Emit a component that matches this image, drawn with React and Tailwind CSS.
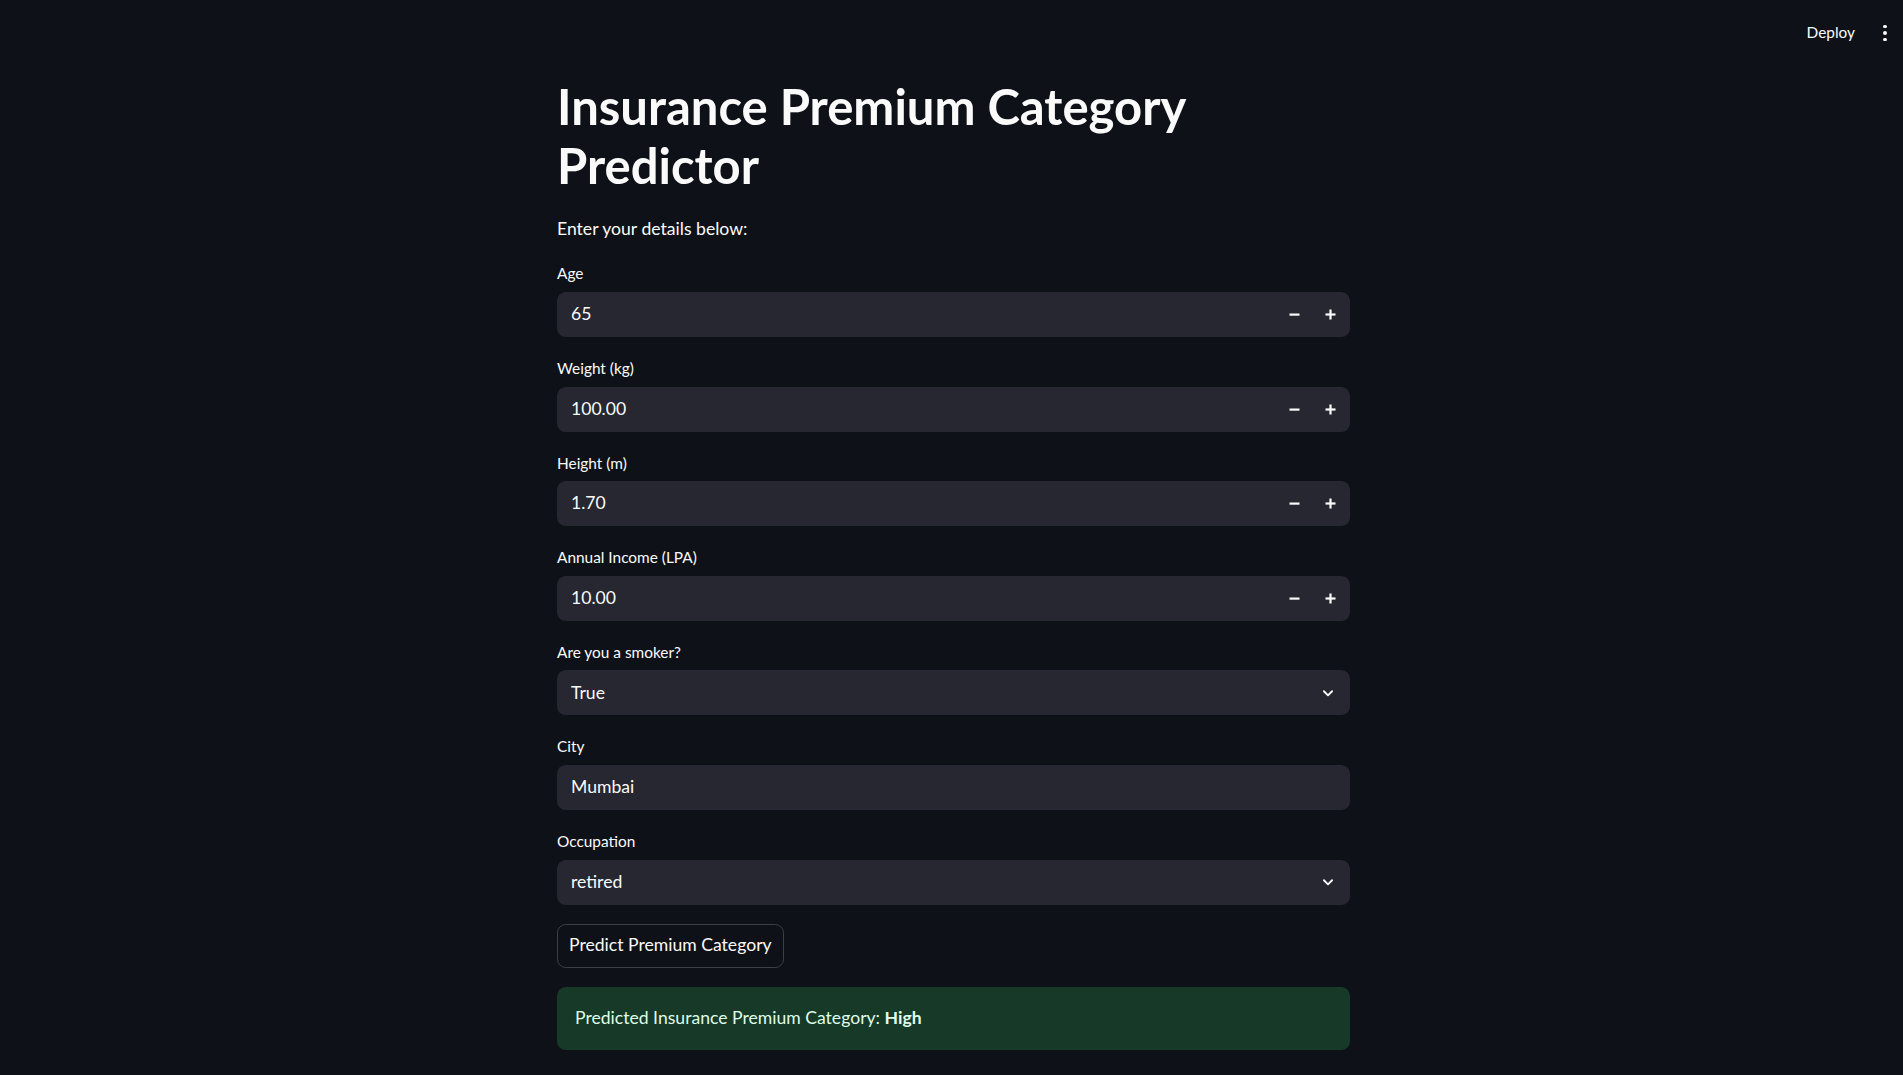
import React from 'react';

const font = { fontFamily: 'Lato, "Noto Sans", sans-serif' };

const Stepper = () => (
  <div className="flex items-center h-full pr-[2px]">
    <button className="w-[36px] h-full flex items-center justify-center text-[#fafafa]">
      <svg width="11" height="11" viewBox="0 0 11 11"><rect x="0.5" y="4.5" width="10" height="2.2" fill="currentColor" /></svg>
    </button>
    <button className="w-[36px] h-full flex items-center justify-center text-[#fafafa]">
      <svg width="11" height="11" viewBox="0 0 11 11"><rect x="0.5" y="4.4" width="10" height="2.2" fill="currentColor" /><rect x="4.4" y="0.5" width="2.2" height="10" fill="currentColor" /></svg>
    </button>
  </div>
);

const Chevron = () => (
  <div className="w-[44px] h-full flex items-center justify-center text-[#fafafa]">
    <svg width="14" height="14" viewBox="0 0 24 24" fill="none" stroke="currentColor" strokeWidth="3.2" strokeLinecap="round" strokeLinejoin="round"><path d="M5 9l7 7 7-7" /></svg>
  </div>
);

const Field = ({ label, value, kind }) => (
  <div className="flex flex-col">
    <div className="h-[28px] mb-[4px] flex items-center text-[15.4px] text-[#fafafa]">{label}</div>
    <div className="h-[45px] rounded-[8.8px] bg-[#262730] flex items-center justify-between">
      <span className="pl-[14px] text-[17.6px] text-[#fafafa]">{value}</span>
      {kind === 'number' && <Stepper />}
      {kind === 'select' && <Chevron />}
    </div>
  </div>
);

export default function App() {
  const fields = [
    { label: 'Age', value: '65', kind: 'number' },
    { label: 'Weight (kg)', value: '100.00', kind: 'number' },
    { label: 'Height (m)', value: '1.70', kind: 'number' },
    { label: 'Annual Income (LPA)', value: '10.00', kind: 'number' },
    { label: 'Are you a smoker?', value: 'True', kind: 'select' },
    { label: 'City', value: 'Mumbai', kind: 'text' },
    { label: 'Occupation', value: 'retired', kind: 'select' },
  ];

  return (
    <div className="min-h-screen bg-[#0e1117] text-[#fafafa]" style={font}>
      <header className="h-[66px] flex items-center justify-end pr-[12px]">
        <span className="text-[15.4px] mr-[24px]">Deploy</span>
        <div className="w-[12px] flex flex-col items-center gap-[3px]">
          <span className="w-[3.5px] h-[3.5px] rounded-full bg-[#fafafa]" />
          <span className="w-[3.5px] h-[3.5px] rounded-full bg-[#fafafa]" />
          <span className="w-[3.5px] h-[3.5px] rounded-full bg-[#fafafa]" />
        </div>
      </header>

      <main className="w-[797px] mx-auto pl-[4px] pt-[11px] pb-[40px]">
        <h1 className="text-[49px] font-bold leading-[59px]">
          Insurance Premium Category
          <br />
          Predictor
        </h1>
        <p className="mt-[20px] text-[17.6px] leading-[28px]">Enter your details below:</p>

        <div className="mt-[17px] flex flex-col gap-[17.6px]">
          {fields.map((f) => (
            <Field key={f.label} {...f} />
          ))}
        </div>

        <button className="mt-[19px] h-[44px] px-[11px] rounded-[8.8px] border border-[#3d3f47] bg-[#0e1117] text-[17.6px] text-[#fafafa]">
          Predict Premium Category
        </button>

        <div className="mt-[19px] h-[63px] rounded-[8.8px] bg-[#173928] flex items-center pl-[18px] text-[17.6px] text-[#dffde9]">
          <span>
            Predicted Insurance Premium Category: <b className="font-bold">High</b>
          </span>
        </div>
      </main>
    </div>
  );
}
